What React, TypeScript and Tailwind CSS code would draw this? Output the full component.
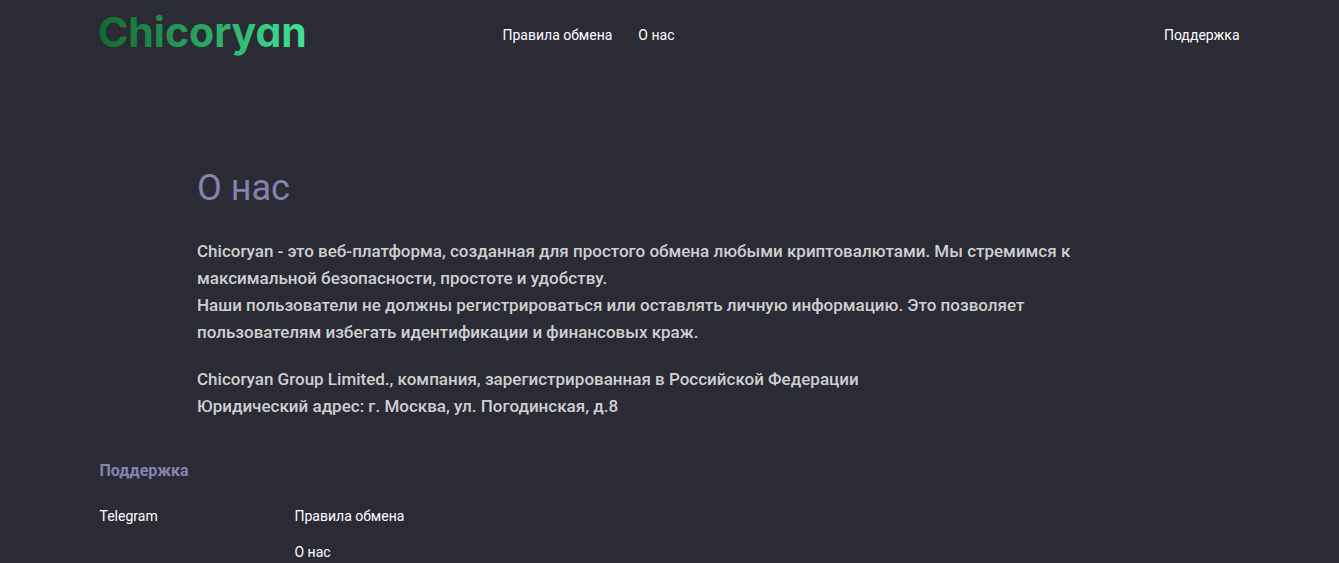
function NavLink({ label, href = '#' }: { label: string; href?: string }) {
  return (
    <a href={href} className="text-sm leading-6 text-white hover:underline">
      {label}
    </a>
  );
}

function Logo() {
  return (
    <a href="#" aria-label="Chicoryan" className="-ml-0.5 block">
      <svg width="220" height="60" viewBox="0 0 220 60" className="overflow-visible">
        <defs>
          <linearGradient id="logo" gradientUnits="userSpaceOnUse" x1="0" y1="0" x2="210" y2="0">
            <stop offset="0" stopColor="#0f6a2c" />
            <stop offset="1" stopColor="#43e396" />
          </linearGradient>
        </defs>
        <text
          x="0"
          y="47"
          fill="url(#logo)"
          fontSize="41"
          fontWeight="700"
          className="font-['Inter',sans-serif] [font-feature-settings:'cv11']"
        >
          Chicoryan
        </text>
      </svg>
    </a>
  );
}

function Header() {
  return (
    <header className="mx-auto flex w-full max-w-[1140px] items-start">
      <div className="w-[403px]">
        <Logo />
      </div>
      <nav className="flex flex-1 gap-[26px] pt-[23px]">
        <NavLink label="Правила обмена" />
        <NavLink label="О нас" />
      </nav>
      <div className="pt-[23px]">
        <NavLink label="Поддержка" />
      </div>
    </header>
  );
}

function About() {
  return (
    <main className="mx-auto mt-[100px] w-full max-w-[945px]">
      <h1 className="text-4xl leading-[56px] text-[#8682b0]">О нас</h1>
      <div className="mt-[22px] max-w-[900px] text-[17px] leading-[27px] font-medium text-[#cfcfd2]">
        <p>
          Chicoryan - это веб-платформа, созданная для простого обмена любыми криптовалютами. Мы стремимся к
          максимальной безопасности, простоте и удобству.
          <br />
          Наши пользователи не должны регистрироваться или оставлять личную информацию. Это позволяет пользователям
          избегать идентификации и финансовых краж.
        </p>
        <p className="mt-5">
          Chicoryan Group Limited., компания, зарегистрированная в Российской Федерации
          <br />
          Юридический адрес: г. Москва, ул. Погодинская, д.8
        </p>
      </div>
    </main>
  );
}

function Footer() {
  return (
    <footer className="mx-auto mt-[38px] w-full max-w-[1140px]">
      <h2 className="text-base leading-[26px] font-bold text-[#8682b0]">Поддержка</h2>
      <div className="mt-5 flex">
        <div className="w-[195px]">
          <NavLink label="Telegram" />
        </div>
        <ul className="flex flex-col gap-3">
          <li className="flex">
            <NavLink label="Правила обмена" />
          </li>
          <li className="flex">
            <NavLink label="О нас" />
          </li>
        </ul>
      </div>
    </footer>
  );
}

export default function App() {
  return (
    <div className="min-h-screen bg-[#2b2b36] font-['Roboto',sans-serif]">
      <Header />
      <About />
      <Footer />
    </div>
  );
}
